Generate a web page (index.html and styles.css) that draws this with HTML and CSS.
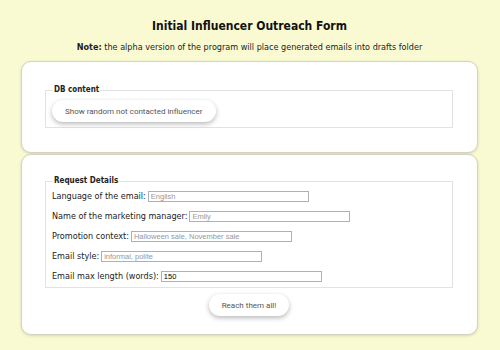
FILE: index.html
```html
<html lang="en">
<head>
    <meta charset="UTF-8">
    <meta name="viewport" content="width=device-width, initial-scale=1.0">
    <title>Initial Influencer Outreach Form</title>
    <link rel="stylesheet" href="styles.css">
</head>
<body>
    <h1>Initial Influencer Outreach Form</h1>
    <p class="note"><b>Note:</b> the alpha version of the program will place generated emails into drafts folder</p>

    <div class="card">
        <fieldset class="db">
            <legend>DB content</legend>
            <button class="button">Show random not contacted influencer</button>
        </fieldset>
    </div>

    <div class="card">
        <fieldset class="details">
            <legend>Request Details</legend>
            <div class="row">
                <label for="language">Language of the email:</label>
                <input type="text" id="language" placeholder="English">
            </div>
            <div class="row">
                <label for="manager">Name of the marketing manager:</label>
                <input type="text" id="manager" placeholder="Emily">
            </div>
            <div class="row">
                <label for="context">Promotion context:</label>
                <input type="text" id="context" placeholder="Halloween sale, November sale">
            </div>
            <div class="row">
                <label for="style">Email style:</label>
                <input type="text" id="style" placeholder="informal, polite">
            </div>
            <div class="row">
                <label for="maxLength">Email max length (words):</label>
                <input type="number" id="maxLength" value="150">
            </div>
        </fieldset>
        <div class="actions">
            <button class="button">Reach them all!</button>
        </div>
    </div>
</body>
</html>
```

FILE: styles.css
```css
body {
    font-family: Tahoma, "DejaVu Sans Condensed", "DejaVu Sans", sans-serif;
    background-color: #fafad2;
    color: #222;
    margin: 0;
    padding: 19px 22px 0 21px;
}
h1 {
    font-size: 12px;
    line-height: 15px;
    text-align: center;
    margin: 0 0 8px 0;
    color: #111;
}
.note {
    font-size: 9px;
    line-height: 11px;
    text-align: center;
    margin: 0 0 8px 0;
    color: #222;
}
.card {
    background: #fff;
    border: 1px solid #d6d3c2;
    border-radius: 10px;
    box-shadow: 0 1px 3px rgba(0, 0, 0, 0.15);
    padding: 23px 24px 24px 23px;
}
.card + .card {
    margin-top: 1px;
    padding-top: 21px;
    padding-bottom: 18px;
}
fieldset {
    border: 1px solid #e2e2e2;
    margin: 0;
    padding: 5px 6px 5px 6px;
}
fieldset.details {
    padding: 0 6px 1px 6px;
}
legend {
    font-size: 8px;
    line-height: 10px;
    font-weight: bold;
    padding: 0 1px;
    margin-left: 1px;
}
.button {
    font-family: Roboto, sans-serif;
    font-size: 8px;
    color: #555;
    background: #fff;
    border: none;
    border-radius: 12px;
    padding: 0 13px;
    height: 22px;
    box-shadow: 0 2px 5px rgba(0, 0, 0, 0.28);
    cursor: pointer;
}
.row {
    display: flex;
    align-items: center;
    gap: 2px;
    height: 20px;
    font-size: 9px;
}
input {
    width: 161px;
    height: 11px;
    box-sizing: border-box;
    border: 1px solid #b0b0b0;
    font-family: "Liberation Sans", Arial, sans-serif;
    font-size: 7.5px;
    padding: 0 2px;
    margin: 0;
}
input::placeholder {
    color: #999;
}
input[type=number]::-webkit-inner-spin-button {
    -webkit-appearance: none;
}
.actions {
    display: flex;
    justify-content: center;
    margin-top: 6px;
}
```
